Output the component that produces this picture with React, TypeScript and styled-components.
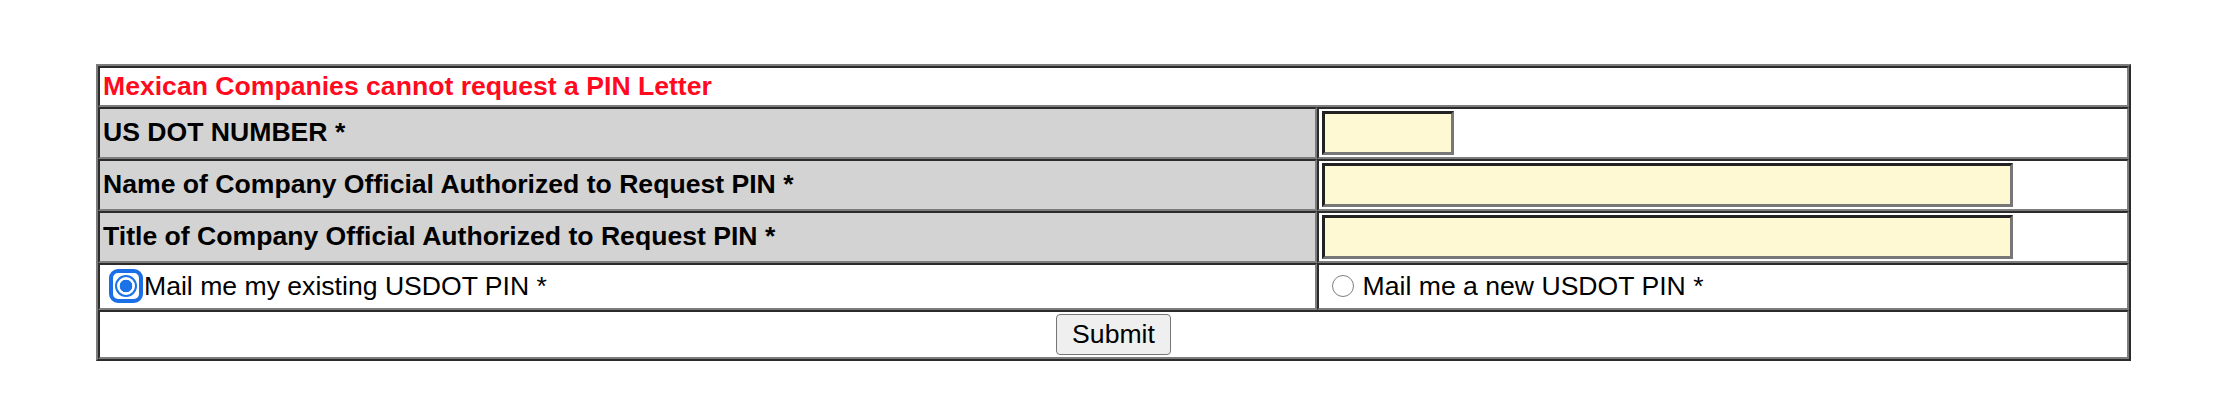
import React from "react";
import styled, { createGlobalStyle } from "styled-components";

const GlobalStyle = createGlobalStyle`
  html, body { margin: 0; padding: 0; background: #ffffff; }
  body { font-family: "Liberation Sans", Arial, sans-serif; font-size: 26.6px; color: #000; }
`;

const Page = styled.div`
  padding: 64px 0 0 96px;
`;

const FormTable = styled.table`
  width: 2035px;
  table-layout: fixed;
  border-collapse: separate;
  border-spacing: 0;
  border-style: solid;
  border-width: 2px;
  border-color: #7d7d7d #2b2b2b #2b2b2b #7d7d7d;
`;

const Cell = styled.td<{ $shade?: boolean; $pad?: number; $center?: boolean }>`
  border-style: solid;
  border-width: 2px;
  border-color: #2b2b2b #7d7d7d #7d7d7d #2b2b2b;
  padding: ${(p) => p.$pad ?? 2}px 3px;
  background: ${(p) => (p.$shade ? "#d3d3d3" : "#ffffff")};
  text-align: ${(p) => (p.$center ? "center" : "left")};
  vertical-align: middle;
  line-height: 1.15;
`;

const Warning = styled.span`
  color: #ff0a1e;
  font-weight: bold;
`;

const Label = styled.span`
  font-weight: bold;
`;

const TextInput = styled.input<{ $w: number }>`
  display: block;
  box-sizing: border-box;
  width: ${(p) => p.$w}px;
  height: 44px;
  margin: 0;
  padding: 0 4px;
  background: #fff9d3;
  border-style: solid;
  border-width: 3px;
  border-color: #222222 #777777 #777777 #222222;
  font: inherit;
  outline: none;
`;

const Option = styled.label<{ $gap: number; $indent: number }>`
  display: flex;
  align-items: center;
  height: 39px;
  gap: ${(p) => p.$gap}px;
  padding-left: ${(p) => p.$indent}px;
`;

const FocusRing = styled.span`
  display: inline-flex;
  box-sizing: border-box;
  width: 34px;
  height: 34px;
  align-items: center;
  justify-content: center;
  border: 4px solid #1a6fe6;
  border-radius: 9px;
  flex: none;
`;

const Radio = styled.input`
  appearance: none;
  -webkit-appearance: none;
  box-sizing: border-box;
  width: 22px;
  height: 22px;
  margin: 0;
  border-radius: 50%;
  border: 1.5px solid #808080;
  background: #ffffff;
  outline: none;
  flex: none;
  &:checked {
    border: 2.5px solid #1a73e8;
    background: radial-gradient(circle, #1a73e8 0 6px, #ffffff 6.6px);
  }
`;

const SubmitButton = styled.button`
  box-sizing: border-box;
  height: 41px;
  padding: 0 15px;
  margin: 0;
  border: 1px solid #767676;
  border-radius: 4px;
  background: #efefef;
  font: inherit;
  color: #000;
  line-height: 1;
  vertical-align: middle;
`;

export default function App() {
  return (
    <>
      <GlobalStyle />
      <Page>
        <FormTable>
          <colgroup>
            <col style={{ width: "60%" }} />
            <col style={{ width: "40%" }} />
          </colgroup>
          <tbody>
            <tr>
              <Cell colSpan={2} $pad={3}>
                <Warning>Mexican Companies cannot request a PIN Letter</Warning>
              </Cell>
            </tr>
            <tr>
              <Cell $shade>
                <Label>US DOT NUMBER *</Label>
              </Cell>
              <Cell>
                <TextInput type="text" $w={132} />
              </Cell>
            </tr>
            <tr>
              <Cell $shade>
                <Label>Name of Company Official Authorized to Request PIN *</Label>
              </Cell>
              <Cell>
                <TextInput type="text" $w={691} />
              </Cell>
            </tr>
            <tr>
              <Cell $shade>
                <Label>Title of Company Official Authorized to Request PIN *</Label>
              </Cell>
              <Cell>
                <TextInput type="text" $w={691} />
              </Cell>
            </tr>
            <tr>
              <Cell>
                <Option $gap={1} $indent={6}>
                  <FocusRing>
                    <Radio type="radio" name="pinType" defaultChecked />
                  </FocusRing>
                  Mail me my existing USDOT PIN *
                </Option>
              </Cell>
              <Cell>
                <Option $gap={9} $indent={10}>
                  <Radio type="radio" name="pinType" />
                  Mail me a new USDOT PIN *
                </Option>
              </Cell>
            </tr>
            <tr>
              <Cell colSpan={2} $center>
                <SubmitButton type="button">Submit</SubmitButton>
              </Cell>
            </tr>
          </tbody>
        </FormTable>
      </Page>
    </>
  );
}
